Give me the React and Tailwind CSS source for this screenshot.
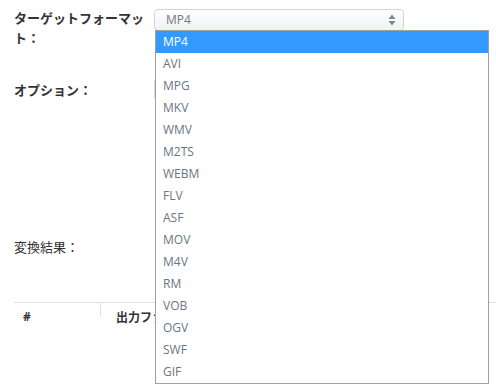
const FORMATS = ['MP4', 'AVI', 'MPG', 'MKV', 'WMV', 'M2TS', 'WEBM', 'FLV', 'ASF', 'MOV', 'M4V', 'RM', 'VOB', 'OGV', 'SWF', 'GIF'];

const font = { fontFamily: '"Open Sans", "Noto Sans CJK JP", sans-serif' };

function SortArrows() {
  return (
    <svg width="8" height="12" viewBox="0 0 8 12" className="text-[#7d8895]">
      <path d="M4 0.5 L7.5 5 H0.5 Z" fill="currentColor" />
      <path d="M4 11.5 L7.5 7 H0.5 Z" fill="currentColor" />
    </svg>
  );
}

export default function App() {
  const selected = 'MP4';

  return (
    <div
      className="relative w-[496px] h-[388px] overflow-hidden bg-white text-[13px] text-[#333] px-[14px] pt-[8px]"
      style={font}
    >
      {/* target format */}
      <div className="flex">
        <div className="w-[140px] font-bold leading-[20px] font-['Noto_Sans_CJK_JP',sans-serif]">
          ターゲットフォーマット：
        </div>
        <div className="mt-[1px] w-[250px] h-[22px] rounded-[4px] border border-[#cfd4da] bg-gradient-to-b from-white to-[#f1f2f4] flex items-center justify-between pl-[11px] pr-[7px]">
          <span className="text-[12px] text-[#777]">{selected}</span>
          <SortArrows />
        </div>
      </div>

      {/* options */}
      <div className="flex mt-[32px]">
        <div className="w-[140px] font-bold leading-[20px] font-['Noto_Sans_CJK_JP',sans-serif]">
          オプション：
        </div>
        <div className="w-[6px] h-[18px] border-l border-[#d6d6d6]" />
      </div>

      {/* result */}
      <div className="mt-[137px] leading-[20px] font-['Noto_Sans_CJK_JP',sans-serif]">変換結果：</div>

      <div className="mt-[45px] -mr-[14px] border-t border-[#dde3ea]">
        <div className="flex text-[12px] font-bold leading-[20px]">
          <div className="w-[87px] pl-[9px] pt-[4px] border-r border-[#dde3ea] h-[14px]">#</div>
          <div className="pl-[15px] pt-[4px] whitespace-nowrap font-['Noto_Sans_CJK_JP',sans-serif]">出力ファイル</div>
        </div>
      </div>

      {/* open dropdown list */}
      <ul className="absolute left-[155px] top-[30px] w-[334px] border border-[#a0a0a0] bg-white">
        {FORMATS.map((f) => (
          <li
            key={f}
            className={`h-[22px] leading-[22px] pl-[7px] text-[12px] ${
              f === selected ? 'bg-[#3399ff] text-white' : 'text-[#687684]'
            }`}
          >
            {f}
          </li>
        ))}
      </ul>
    </div>
  );
}
